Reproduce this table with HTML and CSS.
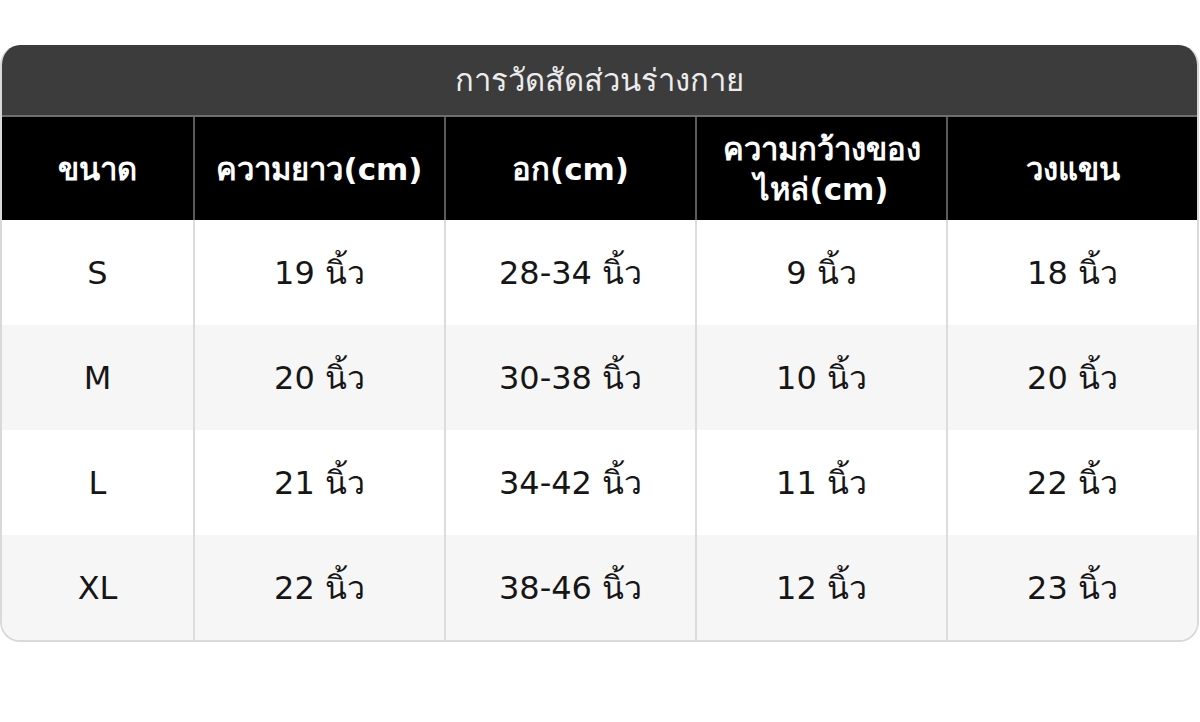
FILE: index.html
```html
<!DOCTYPE html>
<html lang="th">
<head>
<meta charset="utf-8">
<link rel="stylesheet" href="styles.css">
</head>
<body>
<div class="card">
  <div class="title">การวัดสัดส่วนร่างกาย</div>
  <div class="grid">
    <div class="h">ขนาด</div>
    <div class="h">ความยาว(cm)</div>
    <div class="h">อก(cm)</div>
    <div class="h">ความกว้างของ<br>ไหล่(cm)</div>
    <div class="h">วงแขน</div>

    <div class="c">S</div><div class="c">19 นิ้ว</div><div class="c">28-34 นิ้ว</div><div class="c">9 นิ้ว</div><div class="c">18 นิ้ว</div>
    <div class="c alt">M</div><div class="c alt">20 นิ้ว</div><div class="c alt">30-38 นิ้ว</div><div class="c alt">10 นิ้ว</div><div class="c alt">20 นิ้ว</div>
    <div class="c">L</div><div class="c">21 นิ้ว</div><div class="c">34-42 นิ้ว</div><div class="c">11 นิ้ว</div><div class="c">22 นิ้ว</div>
    <div class="c alt">XL</div><div class="c alt">22 นิ้ว</div><div class="c alt">38-46 นิ้ว</div><div class="c alt">12 นิ้ว</div><div class="c alt">23 นิ้ว</div>
  </div>
</div>
</body>
</html>
```
FILE: styles.css
```css
html, body {
  margin: 0;
  padding: 0;
  background: #ffffff;
}
body {
  font-family: "DejaVu Sans", "Noto Sans", sans-serif;
  padding: 45px 0 0 0;
}
.card {
  width: 1199px;
  border: 2px solid #d9d9d9;
  border-top: none;
  border-radius: 20px;
  overflow: hidden;
  box-sizing: border-box;
}
.title {
  height: 70px;
  background: #3c3c3c;
  color: #ececec;
  font-size: 31px;
  display: flex;
  align-items: center;
  justify-content: center;
  border-bottom: 2px solid #6e6e6e;
}
.grid {
  display: grid;
  grid-template-columns: 191px 251px 251px 251px 1fr;
}
.h {
  height: 103px;
  background: #000;
  color: #fff;
  font-weight: bold;
  font-size: 31px;
  line-height: 40px;
  display: flex;
  align-items: center;
  justify-content: center;
  text-align: center;
  border-left: 2px solid #5a5a5a;
  box-sizing: border-box;
}
.h:first-child { border-left: none; }
.c {
  height: 105px;
  display: flex;
  align-items: center;
  justify-content: center;
  font-size: 32px;
  color: #161616;
  background: #ffffff;
  border-left: 2px solid #dcdcdc;
  box-sizing: border-box;
}
.c:nth-child(5n+1) { border-left: none; }
.c.alt { background: #f6f6f6; }
```
